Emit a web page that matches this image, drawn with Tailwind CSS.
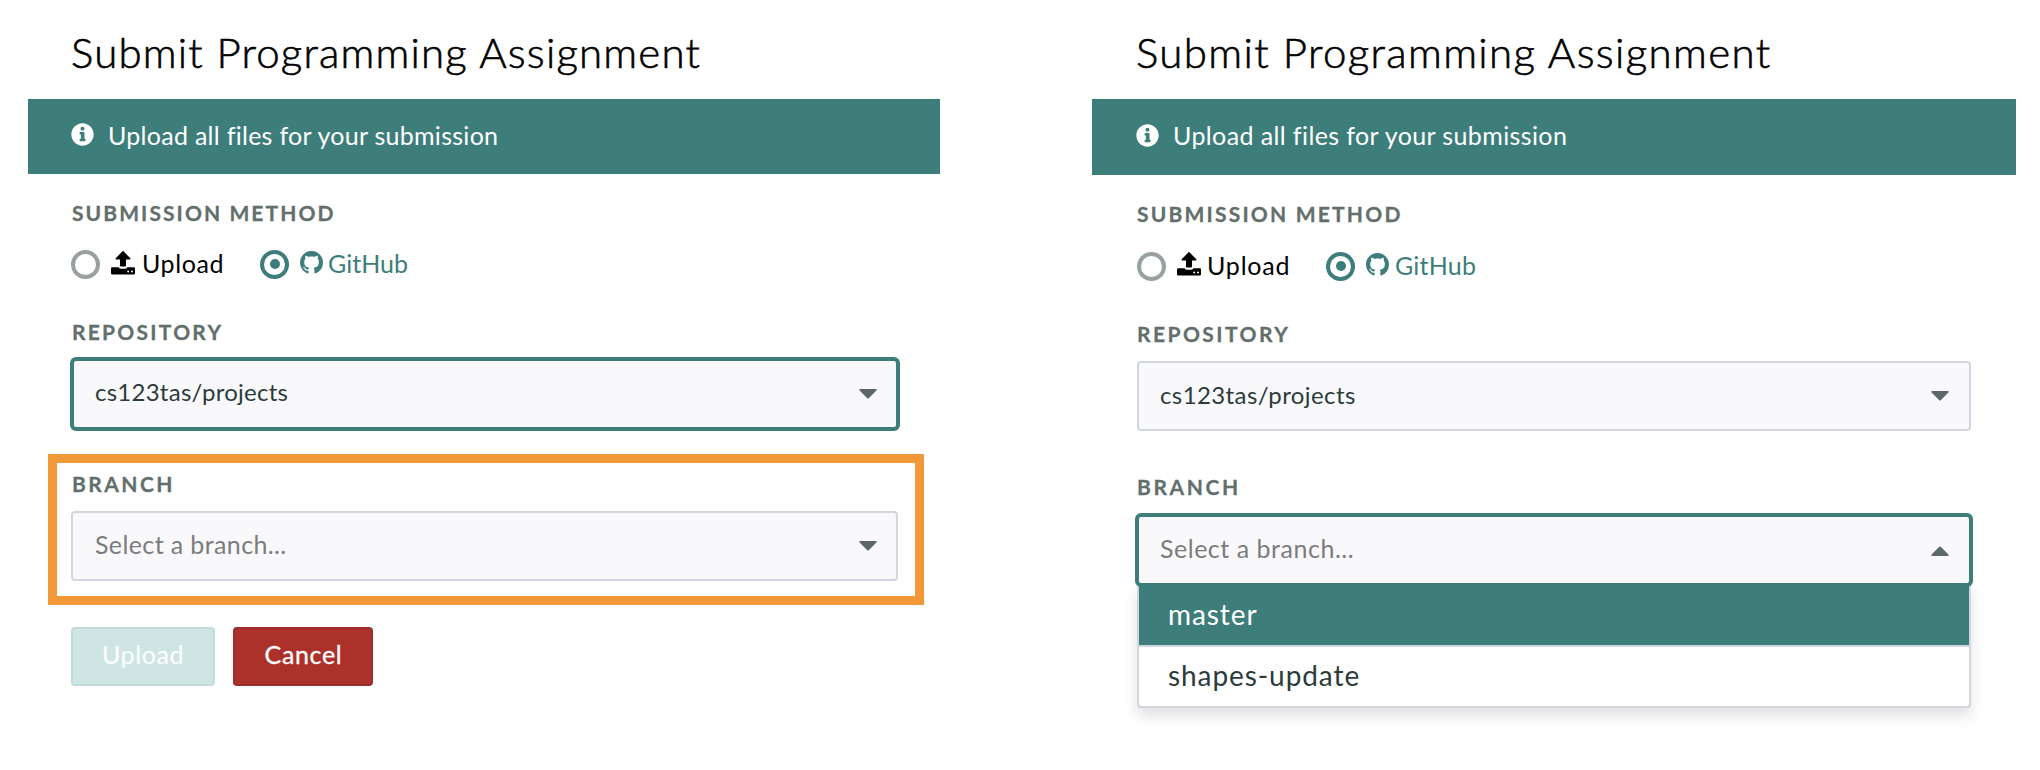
<!DOCTYPE html>
<html lang="en">
<head>
<meta charset="utf-8">
<title>Submit Programming Assignment</title>
<script src="https://cdn.jsdelivr.net/npm/@tailwindcss/browser@4"></script>
</head>
<body class="bg-white">
<svg class="hidden">
  <symbol id="info" viewBox="0 0 512 512"><path d="M256 8C119 8 8 119 8 256s111 248 248 248 248-111 248-248S393 8 256 8zm0 78c25 0 44 17 44 42s-19 42-44 42-44-17-44-42 19-42 44-42zm64 306c0 7-5 12-12 12H204c-7 0-12-5-12-12v-32c0-7 5-12 12-12h16V256h-16c-7 0-12-5-12-12v-32c0-7 5-12 12-12h84c7 0 12 5 12 12v136h16c7 0 12 5 12 12z"/></symbol>
  <symbol id="upload" viewBox="0 0 24 24"><path d="M11.500.3q.5-.5 1 0l6.800 7q.6 1-.4 1.200H15v6q0 1-1 1h-4q-1 0-1-1v-6H5.100q-1-.2-.4-1.200zM1.300 16.300h6.300q.6 1.400 2 1.400h4.800q1.400 0 2-1.400h6.300q1.300 0 1.300 1.300v4.600q0 1.300-1.300 1.300H1.300Q0 23.500 0 22.200v-4.600q0-1.300 1.300-1.300zM17.200 19.500a1 1 0 1 0 0 2 1 1 0 0 0 0-2zm3.800 0a1 1 0 1 0 0 2 1 1 0 0 0 0-2z" fill-rule="evenodd"/></symbol>
  <symbol id="github" viewBox="0 0 16 16"><path d="M8 0C3.580 0 0 3.580 0 8c0 3.540 2.290 6.530 5.470 7.590.4.070.55-.17.55-.38 0-.19-.01-.82-.01-1.490-2.010.37-2.530-.49-2.690-.94-.09-.23-.48-.94-.82-1.130-.28-.15-.68-.52-.01-.53.63-.01 1.080.58 1.230.82.72 1.210 1.870.87 2.330.66.07-.52.28-.87.51-1.070-1.780-.2-3.640-.89-3.640-3.950 0-.87.31-1.590.82-2.150-.08-.2-.36-1.020.08-2.120 0 0 .67-.21 2.200.82.64-.18 1.320-.27 2-.27s1.360.09 2 .27c1.530-1.040 2.200-.82 2.200-.82.44 1.100.16 1.920.08 2.120.51.56.82 1.270.82 2.150 0 3.070-1.870 3.750-3.650 3.950.29.25.54.73.54 1.480 0 1.070-.01 1.930-.01 2.200 0 .21.15.46.55.38A8.010 8.010 0 0 0 16 8c0-4.420-3.580-8-8-8z"/></symbol>
</svg>
<div class="flex h-[770px] w-[2040px] items-start overflow-hidden font-['Lato',sans-serif] text-[25px] leading-6 text-black">

  <section class="ml-7 w-[912px]">
    <h1 class="h-[99px] pt-8 pl-[43px] text-[42px] leading-10 font-light tracking-[1.180px] whitespace-nowrap [-webkit-text-stroke:0.6px_black]">Submit Programming Assignment</h1>
    <div class="flex h-[75px] items-center bg-[#3d7e7b] pl-[43px] text-white">
      <svg class="-mt-1 h-[23px] w-[23px] fill-current"><use href="#info"/></svg>
      <p class="-mt-1 ml-[14px] tracking-[0.280px]">Upload all files for your submission</p>
    </div>
    <div class="pt-[27px] pl-[43px]">
      <h2 class="ml-px text-[21px] font-bold tracking-[2.080px] text-[#636f6d] [-webkit-text-stroke:0.3px_#636f6d]">SUBMISSION METHOD</h2>
      <div class="mt-[25px] flex h-7 items-center">
        <i class="h-[29px] w-[29px] rounded-full border-[4.500px] border-[#98a19f]"></i>
        <svg class="-mt-[3px] ml-[11px] h-6 w-6"><use href="#upload"/></svg>
        <p class="-mt-[2px] ml-[7px] w-[81px] tracking-[0.600px]">Upload</p>
        <i class="ml-[37px] flex h-[29px] w-[29px] items-center justify-center rounded-full border-[4.500px] border-[#3d7e7b]"><b class="h-[10px] w-[10px] rounded-full bg-[#3d7e7b]"></b></i>
        <svg class="-mt-[3px] ml-[11px] h-[23px] w-[23px] fill-[#3d7e7b]"><use href="#github"/></svg>
        <p class="-mt-[2px] ml-[5px] text-[#3d7e7b]">GitHub</p>
      </div>
      <h2 class="mt-[42px] ml-px text-[21px] font-bold tracking-[2.250px] text-[#636f6d] [-webkit-text-stroke:0.3px_#636f6d]">REPOSITORY</h2>
      <div class="mt-[13px] -ml-[1px] flex h-[74px] w-[830px] items-center justify-between rounded-md border-4 border-[#3d7e7b] bg-[#f9f9fb] pr-[19px] pl-[21px] text-[24px] text-[#2c3b3c]">
        <span class="-mt-1 tracking-[0.250px]">cs123tas/projects</span>
        <svg class="h-[10px] w-[18px] fill-[#5c686a]" viewBox="0 0 18 10"><path d="M1.200 0h15.600q1.500.2.600 1.500L10 9q-1 1-2 0L.6 1.500Q-.3.200 1.200 0z"/></svg>
      </div>
    </div>
    <div class="mt-[23px] ml-[20px] h-[151px] w-[876px] border-[9px] border-[#f19838] pt-[9px] pl-[14px]">
      <h2 class="ml-px text-[21px] font-bold tracking-[2.450px] text-[#636f6d] [-webkit-text-stroke:0.3px_#636f6d]">BRANCH</h2>
      <div class="mt-[15px] flex h-[70px] w-[827px] items-center justify-between rounded-[4px] border-2 border-[#d2d7df] bg-[#f9f9fb] pr-[19px] pl-[22px] text-[#7c7c7c]">
        <span class="-mt-1 tracking-[0.380px]">Select a branch...</span>
        <svg class="h-[10px] w-[18px] fill-[#5c686a]" viewBox="0 0 18 10"><path d="M1.200 0h15.600q1.500.2.600 1.500L10 9q-1 1-2 0L.6 1.500Q-.3.200 1.200 0z"/></svg>
      </div>
    </div>
    <div class="mt-[22px] ml-[43px] flex gap-[18px]">
      <button class="h-[59px] w-[144px] rounded-[4px] border-2 border-[#c0dddc] bg-[#cfe5e4] pb-[5px] tracking-[0.600px] text-white">Upload</button>
      <button class="h-[59px] w-[140px] rounded-[4px] border-2 border-[#97302f] bg-[#ad312b] pb-[5px] pl-[1px] tracking-[0.650px] text-white [-webkit-text-stroke:0.3px_white]">Cancel</button>
    </div>
  </section>

  <section class="ml-[152px] w-[924px]">
    <h1 class="h-[99px] pt-8 pl-[44px] text-[42px] leading-10 font-light tracking-[1.370px] whitespace-nowrap [-webkit-text-stroke:0.6px_black]">Submit Programming Assignment</h1>
    <div class="flex h-[76px] items-center bg-[#3d7e7b] pl-[44px] text-white">
      <svg class="-mt-1 h-[23px] w-[23px] fill-current"><use href="#info"/></svg>
      <p class="-mt-1 ml-[14px] tracking-[0.390px]">Upload all files for your submission</p>
    </div>
    <div class="pt-[27px] pl-[45px]">
      <h2 class="text-[21px] font-bold tracking-[2.200px] text-[#636f6d] [-webkit-text-stroke:0.3px_#636f6d]">SUBMISSION METHOD</h2>
      <div class="mt-[26px] flex h-7 items-center">
        <i class="h-[29px] w-[29px] rounded-full border-[4.500px] border-[#98a19f]"></i>
        <svg class="-mt-1 ml-[11px] h-6 w-6"><use href="#upload"/></svg>
        <p class="-mt-[2px] ml-[6px] w-[82px] tracking-[0.800px]">Upload</p>
        <i class="ml-[37px] flex h-[29px] w-[29px] items-center justify-center rounded-full border-[4.500px] border-[#3d7e7b]"><b class="h-[10px] w-[10px] rounded-full bg-[#3d7e7b]"></b></i>
        <svg class="-mt-[3px] ml-[11px] h-[23px] w-[23px] fill-[#3d7e7b]"><use href="#github"/></svg>
        <p class="-mt-[2px] ml-[6px] tracking-[0.200px] text-[#3d7e7b]">GitHub</p>
      </div>
      <h2 class="mt-[42px] text-[21px] font-bold tracking-[2.450px] text-[#636f6d] [-webkit-text-stroke:0.3px_#636f6d]">REPOSITORY</h2>
      <div class="mt-[15px] flex h-[70px] w-[834px] items-center justify-between rounded-[4px] border-2 border-[#d2d7df] bg-[#f9f9fb] pr-[20px] pl-[21px] text-[24px] text-[#2c3b3c]">
        <span class="-mt-[2px] tracking-[0.400px]">cs123tas/projects</span>
        <svg class="h-[10px] w-[18px] fill-[#5c686a]" viewBox="0 0 18 10"><path d="M1.200 0h15.600q1.500.2.600 1.500L10 9q-1 1-2 0L.6 1.500Q-.3.200 1.200 0z"/></svg>
      </div>
      <h2 class="mt-[44px] text-[21px] font-bold tracking-[2.600px] text-[#636f6d] [-webkit-text-stroke:0.3px_#636f6d]">BRANCH</h2>
      <div class="relative mt-[14px]">
        <div class="relative z-10 -ml-[2px] flex h-[74px] w-[838px] items-center justify-between rounded-md border-4 border-[#3d7e7b] bg-[#f9f9fb] pr-[20px] pl-[21px] text-[#7c7c7c]">
          <span class="-mt-1 tracking-[0.520px]">Select a branch...</span>
          <svg class="mt-[2px] h-[10px] w-[18px] rotate-180 fill-[#5c686a]" viewBox="0 0 18 10"><path d="M1.200 0h15.600q1.500.2.600 1.500L10 9q-1 1-2 0L.6 1.500Q-.3.200 1.200 0z"/></svg>
        </div>
        <ul class="absolute top-[70px] left-0 w-[834px] rounded-b-[4px] border-2 border-t-0 border-[#d2d7df] bg-white text-[28px] tracking-[0.920px] text-[#2c3b3c] shadow-[0_8px_14px_rgba(0,0,0,0.12)]">
          <li class="flex h-[64px] items-center border-b-2 border-[#d2d7df] bg-[#3d7e7b] pl-[29px] text-white">master</li>
          <li class="flex h-[59px] items-center pb-[3px] pl-[29px]">shapes-update</li>
        </ul>
      </div>
    </div>
  </section>
</div>
</body>
</html>
